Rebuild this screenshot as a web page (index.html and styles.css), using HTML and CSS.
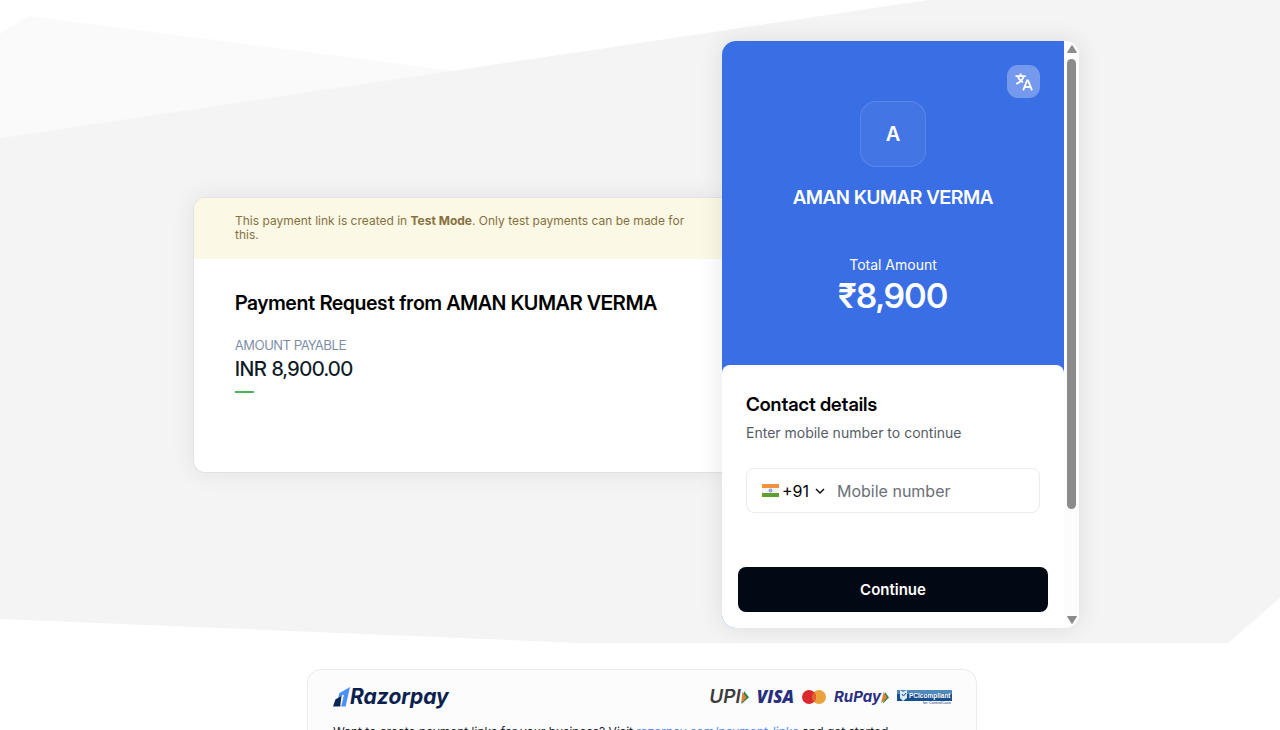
FILE: index.html
```html
<!DOCTYPE html>
<html lang="en">
<head>
    <meta charset="UTF-8">
    <meta name="viewport" content="width=device-width, initial-scale=1.0">
    <title>Payment Request</title>
    <link rel="stylesheet" href="styles.css">
</head>
<body>
    <main class="hero">
        <svg class="hero-bg" viewBox="0 0 1280 643" preserveAspectRatio="none" aria-hidden="true">
            <polygon points="0,34 28,16 455,71 0,138" fill="#fafafa" />
            <polygon points="0,138 928,0 1280,0 1280,598 1228,643 580,643 0,619" fill="#f4f4f4" />
        </svg>

        <!-- Payment summary -->
        <section class="summary">
            <div class="notice">
                This payment link is created in <strong>Test Mode</strong>. Only test payments can be made for this.
            </div>
            <div class="summary-body">
                <h1>Payment Request from AMAN KUMAR VERMA</h1>
                <div class="label">AMOUNT PAYABLE</div>
                <div class="amount">INR 8,900.00</div>
                <div class="underline"></div>
            </div>
        </section>

        <!-- Checkout -->
        <section class="checkout">
            <div class="checkout-main">
                <div class="merchant">
                    <button class="lang-btn" type="button" aria-label="Change language">
                        <svg width="18" height="18" viewBox="0 0 18 18" fill="none" stroke="#fff" stroke-width="1.8">
                            <path d="M0.5 3.2H10.8M5.6 0.5V3.2M8.7 3.4C7.7 6.7 5 9.3 1.2 11M2.7 3.4C3.5 5.7 5.5 8 8 9.4" />
                            <path d="M8.2 17.4L12.1 7.4H13.1L17 17.4M9.6 14H15.6" />
                        </svg>
                    </button>
                    <div class="avatar">A</div>
                    <h2>AMAN KUMAR VERMA</h2>
                    <div class="total-label">Total Amount</div>
                    <div class="total">₹8,900</div>
                </div>
                <form class="contact">
                    <h3>Contact details</h3>
                    <p>Enter mobile number to continue</p>
                    <div class="phone">
                        <svg class="flag" width="17" height="13" viewBox="0 0 17 13" aria-hidden="true">
                            <rect width="17" height="13" fill="#f4f5f7" />
                            <rect width="17" height="4" fill="#ee9140" />
                            <rect y="9" width="17" height="4" fill="#5f9f32" />
                            <circle cx="8.5" cy="6.5" r="1.5" fill="#b5bff0" stroke="#6677d8" stroke-width="0.8" />
                        </svg>
                        <select class="code" aria-label="Country code">
                            <option>+91</option>
                        </select>
                        <svg class="chevron" width="10" height="10" viewBox="0 0 10 10" fill="none" stroke="#111" stroke-width="1.5" aria-hidden="true">
                            <path d="M1 3L5 7L9 3" />
                        </svg>
                        <input class="mobile" type="tel" placeholder="Mobile number" aria-label="Mobile number">
                    </div>
                    <button class="continue-btn" type="button">Continue</button>
                </form>
            </div>
            <div class="scrollbar" aria-hidden="true">
                <svg width="10" height="8" viewBox="0 0 10 8"><path d="M5 0.5L9.5 7.5H0.5Z" fill="#8b8b8b" stroke="#8b8b8b" stroke-linejoin="round" /></svg>
                <div class="thumb"></div>
                <svg width="10" height="8" viewBox="0 0 10 8"><path d="M5 7.5L9.5 0.5H0.5Z" fill="#8b8b8b" stroke="#8b8b8b" stroke-linejoin="round" /></svg>
            </div>
        </section>
    </main>

    <div class="page-end">
        <footer class="footer">
            <div class="logos">
                <div class="razorpay">
                    <svg width="17" height="20" viewBox="0 0 17 20" aria-hidden="true">
                        <path d="M2.4 12.5L8.6 8.5L7.2 19.5H0Z" fill="#072654" />
                        <path d="M6.2 6.3L17 0L12.6 19.5H8.2L11 7.4L5.4 10.4Z" fill="#4a90f8" />
                    </svg>
                    <span>Razorpay</span>
                </div>
                <div class="methods">
                    <div class="upi">
                        <span>UPI</span>
                        <svg width="8" height="13" viewBox="0 0 8 13" aria-hidden="true">
                            <path d="M3 0L8 6.3L0.5 13Z" fill="#1f8a4c" />
                            <path d="M1.4 1L5.5 6.5L0 12.5Z" fill="#ec7a31" />
                        </svg>
                    </div>
                    <span class="visa">VISA</span>
                    <svg width="24" height="14" viewBox="0 0 24 14" role="img" aria-label="Mastercard">
                        <circle cx="17" cy="7" r="7" fill="#eba13c" />
                        <circle cx="7" cy="7" r="7" fill="#d9292e" />
                        <path d="M12 2A7 7 0 0 1 12 12A7 7 0 0 1 12 2Z" fill="#e4632c" />
                    </svg>
                    <div class="rupay">
                        <span>RuPay</span>
                        <svg width="8" height="13" viewBox="0 0 8 13" aria-hidden="true">
                            <path d="M4 1L8 6.5L2 12.5Z" fill="#1f8a4c" />
                            <path d="M2.6 1L6 6.5L0 12.5Z" fill="#ec7a31" />
                        </svg>
                    </div>
                    <svg class="pci" width="55" height="16" viewBox="0 0 55 16" role="img" aria-label="PCI compliant by ControlCase">
                        <rect y="1" width="55" height="11" fill="#17508f" />
                        <rect y="1" width="55" height="4" fill="#4f8abb" />
                        <path d="M3 1L6 3L10 1V9L6 12L3 9Z" fill="#dbe9f4" />
                        <path d="M5 5L6.5 7L9 4" fill="none" stroke="#17508f" />
                        <text x="12" y="9" font-size="6.5" fill="#fff">PCIcompliant</text>
                        <text x="26" y="15" font-size="4" font-weight="400" fill="#26366e">for ControlCase</text>
                    </svg>
                </div>
            </div>
            <p>Want to create payment links for your business? Visit <a href="#">razorpay.com/payment-links</a> and get started</p>
        </footer>
    </div>
</body>
</html>
```
FILE: styles.css
```css
* {
    box-sizing: border-box;
}

body {
    margin: 0;
    font-family: Inter, "Liberation Sans", sans-serif;
    background: #fff;
    color: #000;
    overflow-x: hidden;
}

h1, h2, h3, p {
    margin: 0;
}

h1, h2, h3 {
    font-size: 20px;
    line-height: 24px;
    font-weight: 600;
}

h1, h2, h3,
.label,
.amount,
.total {
    font-family: "Inter Display", Inter, sans-serif;
}

button, input, select {
    font-family: inherit;
}

/* Hero */
.hero {
    position: relative;
    display: flex;
    justify-content: center;
    align-items: center;
    padding: 41px 8px 15px 0;
}

.hero-bg {
    position: absolute;
    inset: 0;
    width: 100%;
    height: 100%;
    z-index: -1;
}

/* Summary card */
.summary {
    flex: 0 1 529px;
    min-height: 276px;
    background: #fff;
    border: 1px solid #e2e2e4;
    border-right: none;
    border-radius: 12px 0 0 12px;
    box-shadow: 0 0 24px rgba(0, 0, 0, 0.08);
    overflow: hidden;
}

.notice {
    padding: 16px 24px 17px 41px;
    background: #fbf8e5;
    color: #87703f;
    font-size: 12px;
    line-height: 14px;
}

.summary-body {
    padding: 32px 24px 32px 41px;
}

.label {
    margin-top: 22px;
    font-size: 13px;
    line-height: 16px;
    color: #7b8ca6;
}

.amount {
    margin-top: 4px;
    font-size: 20px;
    line-height: 24px;
    font-weight: 500;
    color: #0d1a26;
}

.underline {
    width: 19px;
    height: 2px;
    margin-top: 10px;
    background: #4bb35a;
}

/* Checkout panel */
.checkout {
    position: relative;
    flex: 0 0 357px;
    display: flex;
    background: #fff;
    border-radius: 14px;
    box-shadow: 0 0 24px rgba(0, 0, 0, 0.1);
    overflow: hidden;
}

.checkout-main {
    flex: 1;
    min-width: 0;
    background: #3a6ee4;
}

.merchant {
    display: flex;
    flex-direction: column;
    align-items: center;
    padding: 24px 24px 48px;
    color: #fff;
}

.lang-btn {
    display: flex;
    align-items: center;
    justify-content: center;
    align-self: flex-end;
    width: 33px;
    height: 33px;
    padding: 0;
    border: none;
    border-radius: 11px;
    background: rgba(255, 255, 255, 0.3);
    cursor: pointer;
}

.avatar {
    display: flex;
    align-items: center;
    justify-content: center;
    width: 66px;
    height: 66px;
    margin-top: 3px;
    border: 1px solid rgba(255, 255, 255, 0.12);
    border-radius: 16px;
    background: rgba(255, 255, 255, 0.05);
    font-size: 20px;
    font-weight: 600;
}

.merchant h2 {
    margin-top: 19px;
    font-size: 19px;
}

.total-label {
    margin-top: 45px;
    font-size: 14px;
    line-height: 20px;
}

.total {
    font-size: 34px;
    line-height: 42px;
    font-weight: 600;
}

/* Contact form */
.contact {
    padding: 28px 16px 16px;
    background: #fff;
    border-radius: 8px 8px 0 0;
}

.contact h3,
.contact p {
    padding: 0 8px;
}

.contact h3 {
    font-size: 19px;
}

.contact p {
    margin-top: 6px;
    font-size: 14px;
    line-height: 20px;
    color: #555c67;
}

.phone {
    display: flex;
    align-items: center;
    height: 45px;
    margin: 25px 8px 54px;
    padding: 0 15px;
    border: 1px solid #ebebed;
    border-radius: 8px;
}

.code {
    appearance: none;
    width: 30px;
    margin: 0 3px 0 3px;
    padding: 0;
    border: none;
    background: none;
    font-size: 16px;
    color: #000;
}

.mobile {
    flex: 1;
    min-width: 0;
    margin-left: 12px;
    padding: 0;
    border: none;
    outline: none;
    background: none;
    font-size: 16px;
}

.mobile::placeholder {
    color: #6b7078;
    opacity: 1;
}

.continue-btn {
    display: block;
    width: 100%;
    height: 45px;
    border: none;
    border-radius: 8px;
    background: #020814;
    color: #fff;
    font-size: 15px;
    font-weight: 600;
    cursor: pointer;
}

/* Scrollbar */
.scrollbar {
    display: flex;
    flex-direction: column;
    align-items: center;
    width: 15px;
    padding: 4px 0;
    background: #fcfcfc;
}

.thumb {
    width: 9px;
    height: 450px;
    margin: 6px 0 auto;
    border-radius: 5px;
    background: #8b8b8b;
}

/* Footer */
.page-end {
    padding: 26px 0 0 4px;
}

.footer {
    width: 670px;
    max-width: 100%;
    margin: 0 auto;
    padding: 12px 24px 12px 25px;
    background: #fcfcfc;
    border: 1px solid #ebebed;
    border-radius: 14px;
}

.logos {
    display: flex;
    justify-content: space-between;
    align-items: center;
    height: 30px;
}

.razorpay,
.methods,
.upi,
.rupay {
    display: flex;
    align-items: center;
}

.razorpay {
    color: #0a2150;
    font: italic 700 21px/28px Inter, sans-serif;
}

.methods {
    gap: 8px;
}

.upi {
    color: #3c3c3e;
    font: italic 600 19px/18px Inter, sans-serif;
}

.visa {
    color: #27307d;
    font: italic 800 17px/18px "Open Sans", sans-serif;
}

.rupay {
    color: #2b2f80;
    font: italic 700 15px/18px Inter, sans-serif;
}

.pci {
    font-family: "Liberation Sans", sans-serif;
    font-weight: 700;
}

.footer p {
    margin-top: 10px;
    font-size: 12px;
    line-height: 20px;
    color: #1c2733;
}

.footer a {
    color: #528ff0;
    text-decoration: none;
}
```
